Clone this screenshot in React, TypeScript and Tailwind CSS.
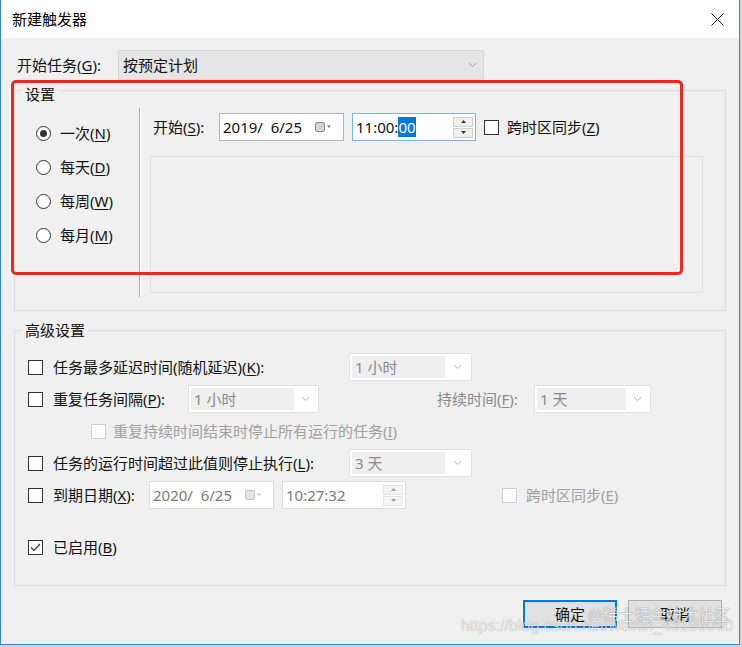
import React from "react";

const Chevron = ({ color = "#8a8a8a" }: { color?: string }) => (
  <svg width="9" height="6" viewBox="0 0 9 6">
    <path d="M1 1.2l3.5 3.3L8 1.2" fill="none" stroke={color} strokeWidth="1" />
  </svg>
);

const CalIcon = ({ faded = false }: { faded?: boolean }) => (
  <svg width="18" height="10" viewBox="0 0 18 10">
    <rect x="0.5" y="0.5" width="9" height="9" rx="1.5" fill={faded ? "#e4e4e4" : "#d4d4d4"} stroke={faded ? "#c4c4c4" : "#8c8c8c"} />
    <path d="M12 3.5h4l-2 2.5z" fill={faded ? "#c4c4c4" : "#7a7a7a"} />
  </svg>
);

const Spinner = ({ faded = false }: { faded?: boolean }) => (
  <div className="flex flex-col gap-[1px] mr-[2px]">
    <div className={`w-[20px] h-[10px] border ${faded ? "border-[#e4e4e4] bg-[#f4f4f4]" : "border-[#d0d0d0] bg-[#efefef]"} flex items-center justify-center`}>
      <svg width="5" height="3" viewBox="0 0 5 3">
        <path d="M0 3L2.5 0L5 3Z" fill={faded ? "#9a9a9a" : "#333"} />
      </svg>
    </div>
    <div className={`w-[20px] h-[10px] border ${faded ? "border-[#e4e4e4] bg-[#f4f4f4]" : "border-[#d0d0d0] bg-[#efefef]"} flex items-center justify-center`}>
      <svg width="5" height="3" viewBox="0 0 5 3">
        <path d="M0 0L2.5 3L5 0Z" fill={faded ? "#9a9a9a" : "#333"} />
      </svg>
    </div>
  </div>
);

const Check = ({ disabled = false, checked = false }: { disabled?: boolean; checked?: boolean }) => (
  <div
    className={`w-[15px] h-[15px] shrink-0 border bg-white flex items-center justify-center ${
      disabled ? "border-[#cfcfcf]" : "border-[#333333]"
    }`}
  >
    {checked && (
      <svg width="11" height="9" viewBox="0 0 11 9">
        <path d="M1 4.5l3 3L10 1" fill="none" stroke="#333" strokeWidth="1.2" />
      </svg>
    )}
  </div>
);

const Radio = ({ checked = false }: { checked?: boolean }) => (
  <div className="w-[15px] h-[15px] shrink-0 rounded-full border border-[#333333] bg-white flex items-center justify-center">
    {checked && <div className="w-[7px] h-[7px] rounded-full bg-[#333333]" />}
  </div>
);

const DisabledCombo = ({ text, w, inner }: { text: string; w: string; inner: string }) => (
  <div className={`${w} h-[28px] bg-white border border-[#e2e2e2] flex items-center p-[2px]`}>
    <div className={`${inner} h-full bg-[#efefef] pl-[3px] flex items-center text-[#8a8a8a]`}>{text}</div>
    <div className="flex-1 flex justify-center">
      <Chevron color="#b8b8b8" />
    </div>
  </div>
);

export default function App() {
  return (
    <div className="w-[742px] h-[647px] bg-[#cdd5dd] relative overflow-hidden font-['Noto_Sans','Noto_Sans_CJK_SC',sans-serif] text-[15px] leading-[20px] text-[#111]">
      <div className="w-[740px] h-[645px] border-x border-b border-[#3a85cf] flex flex-col">
        {/* Title bar */}
        <div className="h-[38px] bg-white flex items-center justify-between pl-[11px] shrink-0">
          <span className="text-[15px] text-black">新建触发器</span>
          <div className="w-[44px] h-full flex items-center justify-center">
            <svg width="13" height="13" viewBox="0 0 13 13">
              <path d="M0.5 0.5L12.5 12.5M12.5 0.5L0.5 12.5" stroke="#111" strokeWidth="1" />
            </svg>
          </div>
        </div>

        {/* Body */}
        <div className="flex-1 bg-[#f0f0f0] flex flex-col">
          {/* Start task row */}
          <div className="mt-[12px] pl-[16px] flex items-center h-[30px]">
            <span className="w-[101px]">
              开始任务(<u className="underline-offset-2">G</u>):
            </span>
            <div className="w-[366px] h-[30px] bg-[#e5e5e5] border border-[#d6d6d6] flex items-center justify-between pl-[4px] pr-[6px]">
              <span>按预定计划</span>
              <Chevron color="#9a9a9a" />
            </div>
          </div>

          {/* Settings groupbox */}
          <fieldset className="-mt-[2px] ml-[13px] w-[712px] border border-[#dcdcdc]">
            <legend className="ml-[7px] px-[3px] pt-[8px] leading-[16px]">设置</legend>
            <div className="flex pt-[6px] pb-[13px]">
              <div className="w-[124px] flex flex-col pt-[8px] pl-[21px]">
                {[
                  ["一次", "N", true],
                  ["每天", "D", false],
                  ["每周", "W", false],
                  ["每月", "M", false],
                ].map(([t, k, c]) => (
                  <div key={k as string} className="h-[34px] flex items-center gap-[9px]">
                    <Radio checked={c as boolean} />
                    <span>
                      {t as string}(<u className="underline-offset-2">{k as string}</u>)
                    </span>
                  </div>
                ))}
              </div>
              <div className="w-[2px] h-[189px] border-l border-l-[#a8a8a8] border-r border-r-white" />
              <div className="flex flex-col">
                <div className="mt-[5px] pl-[12px] h-[28px] flex items-center">
                  <span className="w-[66px]">
                    开始(<u className="underline-offset-2">S</u>):
                  </span>
                  <div className="w-[125px] h-[28px] bg-white border border-[#b4b4b4] flex items-center justify-between pl-[3px] pr-[10px]">
                    <span>2019/&nbsp; 6/25</span>
                    <CalIcon />
                  </div>
                  <div className="ml-[8px] w-[124px] h-[28px] bg-white border border-[#7eb4ea] flex items-center justify-between pl-[3px]">
                    <span>
                      11:00:<span className="bg-[#0078d7] text-white">00</span>
                    </span>
                    <Spinner />
                  </div>
                  <div className="ml-[8px] flex items-center gap-[8px]">
                    <Check />
                    <span>
                      跨时区同步(<u className="underline-offset-2">Z</u>)
                    </span>
                  </div>
                </div>
                <div className="ml-[9px] mt-[15px] w-[553px] h-[137px] border border-[#e2e2e2]" />
              </div>
            </div>
          </fieldset>

          {/* Advanced groupbox */}
          <fieldset className="mt-[9px] ml-[13px] w-[712px] border border-[#dcdcdc]">
            <legend className="ml-[7px] px-[3px] leading-[20px]">高级设置</legend>
            <div className="flex flex-col pt-[11px] pl-[13px] pb-[22px]">
              <div className="h-[32px] flex items-center">
                <Check />
                <span className="ml-[10px] w-[296px]">
                  任务最多延迟时间(随机延迟)(<u className="underline-offset-2">K</u>):
                </span>
                <DisabledCombo text="1 小时" w="w-[123px]" inner="w-[93px]" />
              </div>
              <div className="h-[32px] flex items-center">
                <Check />
                <span className="ml-[10px] w-[135px]">
                  重复任务间隔(<u className="underline-offset-2">P</u>):
                </span>
                <DisabledCombo text="1 小时" w="w-[131px]" inner="w-[103px]" />
                <span className="ml-[118px] w-[97px] text-[#8a8a8a]">
                  持续时间(<u className="underline-offset-2">F</u>):
                </span>
                <DisabledCombo text="1 天" w="w-[117px]" inner="w-[89px]" />
              </div>
              <div className="h-[32px] flex items-center pl-[63px]">
                <Check disabled />
                <span className="ml-[7px] text-[#a0a0a0]">
                  重复持续时间结束时停止所有运行的任务(<u className="underline-offset-2">I</u>)
                </span>
              </div>
              <div className="h-[32px] flex items-center">
                <Check />
                <span className="ml-[10px] w-[296px]">
                  任务的运行时间超过此值则停止执行(<u className="underline-offset-2">L</u>):
                </span>
                <DisabledCombo text="3 天" w="w-[123px]" inner="w-[93px]" />
              </div>
              <div className="h-[32px] flex items-center">
                <Check />
                <span className="ml-[10px] w-[96px]">
                  到期日期(<u className="underline-offset-2">X</u>):
                </span>
                <div className="w-[125px] h-[28px] bg-white border border-[#dcdcdc] flex items-center justify-between pl-[3px] pr-[10px] text-[#7a7a7a]">
                  <span>2020/&nbsp; 6/25</span>
                  <CalIcon faded />
                </div>
                <div className="ml-[8px] w-[124px] h-[28px] bg-white border border-[#dcdcdc] flex items-center justify-between pl-[3px] text-[#7a7a7a]">
                  <span>10:27:32</span>
                  <Spinner faded />
                </div>
                <div className="ml-[96px] flex items-center gap-[9px]">
                  <Check disabled />
                  <span className="text-[#a0a0a0]">
                    跨时区同步(<u className="underline-offset-2">E</u>)
                  </span>
                </div>
              </div>
              <div className="mt-[20px] h-[32px] flex items-center">
                <Check checked />
                <span className="ml-[10px]">
                  已启用(<u className="underline-offset-2">B</u>)
                </span>
              </div>
            </div>
          </fieldset>

          {/* Buttons */}
          <div className="mt-[14px] flex justify-end gap-[11px] pr-[17px]">
            <div className="w-[94px] h-[28px] bg-[#e1e1e1] border-2 border-[#0078d7] flex items-center justify-center">
              确定
            </div>
            <div className="w-[94px] h-[28px] bg-[#e1e1e1] border border-[#adadad] flex items-center justify-center">
              取消
            </div>
          </div>
        </div>
      </div>

      {/* Red annotation rectangle */}
      <div className="absolute left-[11px] top-[80px] w-[672px] h-[195px] border-[3px] border-[#ea2a1f] rounded-[5px] pointer-events-none" />

      {/* Watermarks */}
      <div className="absolute left-[461px] top-[617px] font-['Liberation_Sans',sans-serif] text-[16px] leading-[18px] text-white/70 [text-shadow:0_0_1px_rgba(0,0,0,0.35)] pointer-events-none whitespace-nowrap">
        https://blog.csdn.net/weixin_43196060
      </div>
      <div className="absolute left-[588px] top-[605px] text-[16px] leading-[20px] text-white/85 [text-shadow:0_0_1px_rgba(0,0,0,0.6)] pointer-events-none whitespace-nowrap">
        @稀土掘金技术社区
      </div>
    </div>
  );
}
